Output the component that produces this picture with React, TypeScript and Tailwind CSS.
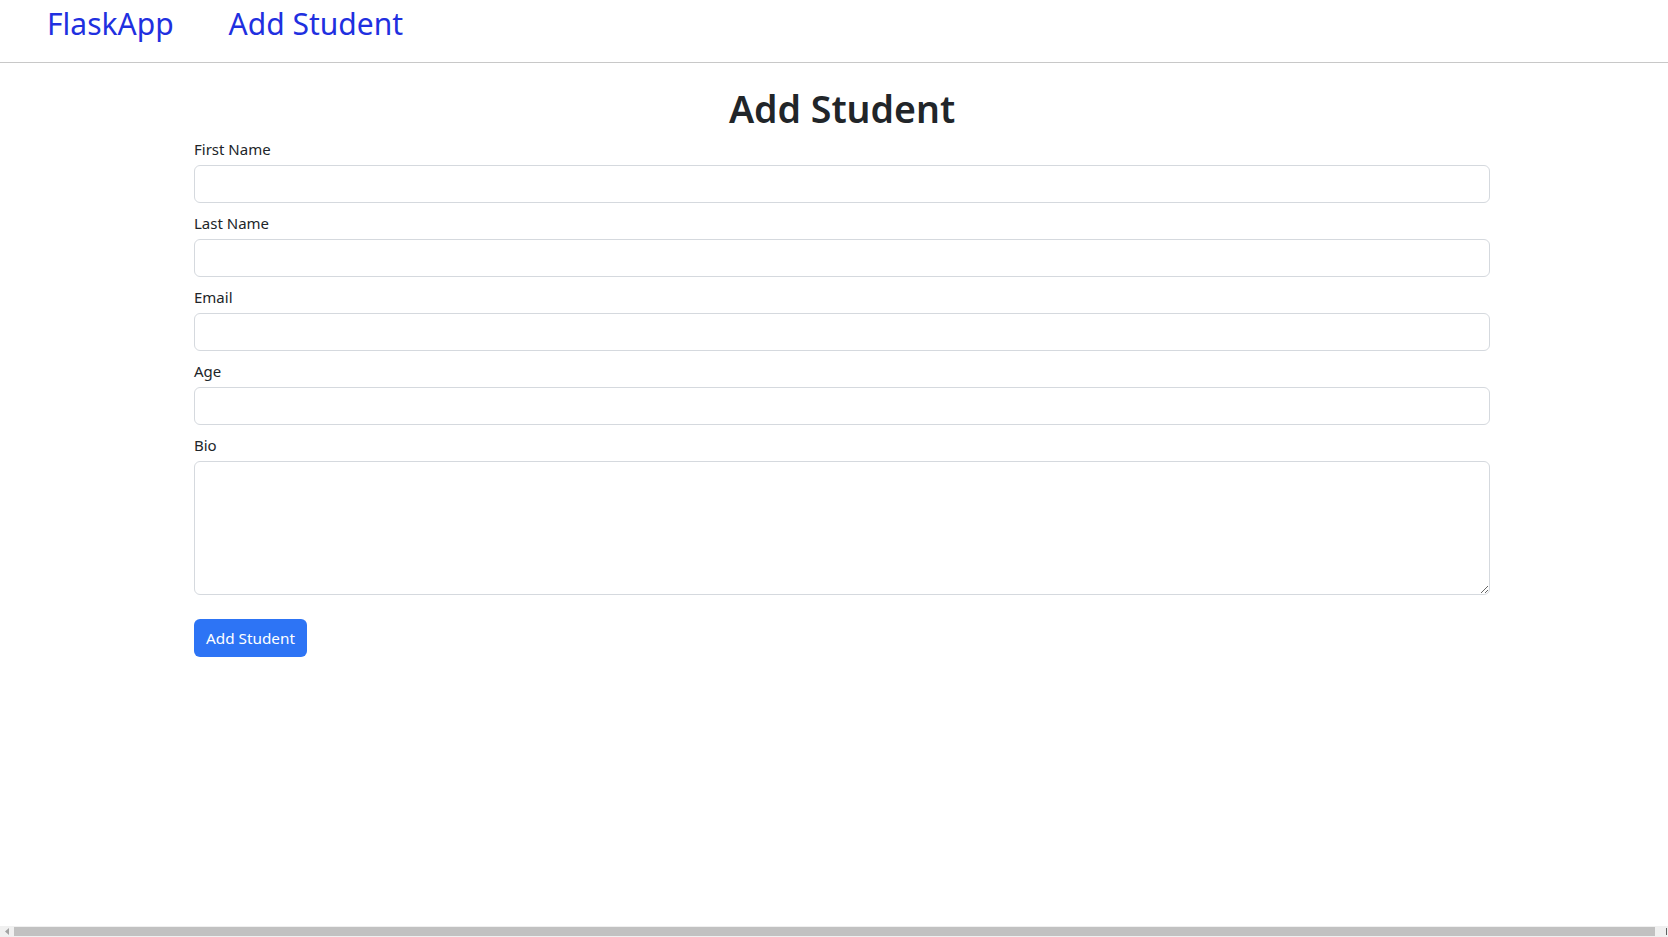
import React from "react";

const fontStack = { fontFamily: '"Segoe UI", "Noto Sans", "Open Sans", sans-serif' };

function Field({ label, textarea }: { label: string; textarea?: boolean }) {
  return (
    <div className="mb-2 flex flex-col">
      <label className="mb-1 text-[15px] leading-6 text-[#212529]">{label}</label>
      {textarea ? (
        <textarea
          rows={5}
          className="h-[134px] w-full resize-y rounded-[6px] border border-[#d5d9de] bg-white px-3 py-1.5 text-[16px] outline-none"
        />
      ) : (
        <input
          type="text"
          className="h-[38px] w-full rounded-[6px] border border-[#d5d9de] bg-white px-3 text-[16px] outline-none"
        />
      )}
    </div>
  );
}

export default function App() {
  return (
    <div className="flex h-[937px] flex-col overflow-hidden bg-white" style={fontStack}>
      <nav className="flex h-[63px] shrink-0 items-start gap-[55px] border-b border-[#c8c8c8] px-[47px] pt-[2px]">
        <a href="#" className="text-[30px] leading-[44px] text-[#1f30e0]">FlaskApp</a>
        <a href="#" className="text-[30px] leading-[44px] text-[#1f30e0]">Add Student</a>
      </nav>
      <main className="flex-1">
        <div className="ml-[194px] w-[1296px] pt-[22px]">
          <h1 className="mb-[4px] text-center text-[37.5px] font-semibold leading-[48px] text-[#212529]">
            Add Student
          </h1>
          <form>
            <Field label="First Name" />
            <Field label="Last Name" />
            <Field label="Email" />
            <Field label="Age" />
            <Field label="Bio" textarea />
            <button
              type="button"
              className="mt-[16px] h-[38px] rounded-[6px] bg-[#2d74f5] px-[12px] text-[15.3px] leading-6 text-white"
            >
              Add Student
            </button>
          </form>
        </div>
      </main>
      <div className="flex h-[11px] shrink-0 items-stretch bg-[#f0f0f0]">
        <div className="flex w-[14px] items-center justify-center">
          <svg width="5" height="7" viewBox="0 0 5 7">
            <path d="M4 0 L0 3.5 L4 7 Z" fill="#a3a3a3" />
          </svg>
        </div>
        <div className="my-[1px] flex-1 bg-[#c1c1c1]" />
        <div className="flex w-[13px] items-center justify-end pr-[1px]">
          <div className="h-[7px] w-[1px] bg-[#606060]" />
        </div>
      </div>
    </div>
  );
}
